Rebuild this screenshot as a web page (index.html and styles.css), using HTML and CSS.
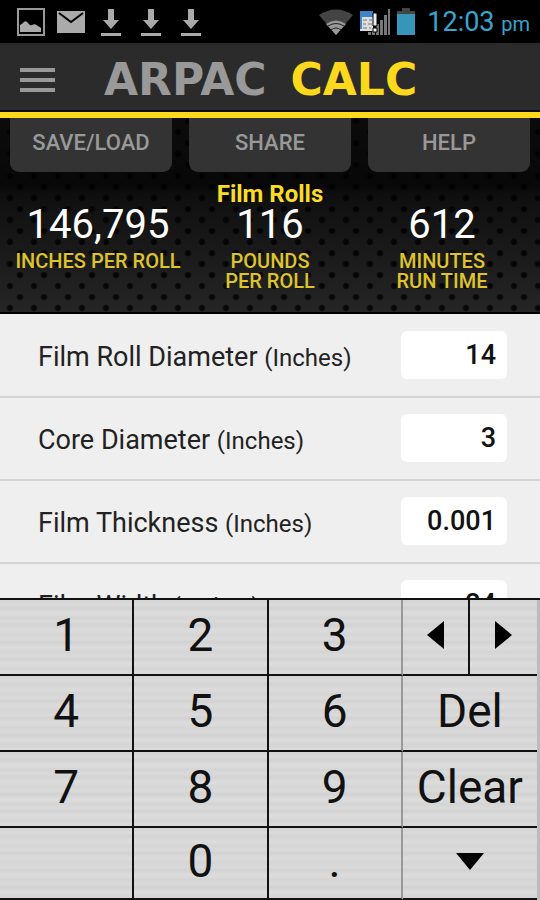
FILE: index.html
```html
<!doctype html>
<html lang="en">
<head>
    <meta charset="UTF-8">
    <meta name="viewport" content="width=device-width, initial-scale=1.0">
    <title>ARPAC CALC</title>

    <link rel="stylesheet" href="styles.css">
</head>
<body>

<div class="status">
    <svg class="status-icon" width="28" height="28" viewBox="0 0 28 28">
        <path d="M1 1H27V27H1Z" fill="none" stroke="#999" stroke-width="2"/>
        <path d="M3 24V17Q5 16 7 14Q9 12 11 15Q13 18 15 17Q18 15 21 18L24 20V24Z" fill="#aaa"/>
    </svg>
    <svg class="status-icon" width="28" height="22" viewBox="0 0 28 22">
        <path d="M0 0H28V22H0Z" fill="#aaa"/>
        <path d="M2 2L14 11L26 2" fill="none" stroke="#000" stroke-width="2"/>
    </svg>
    <svg class="status-icon" width="28" height="28" viewBox="0 0 28 28">
        <path d="M11 1H17V12H22L14 21L6 12H11ZM4 25H24V28H4Z" fill="#aaa"/>
    </svg>
    <svg class="status-icon" width="28" height="28" viewBox="0 0 28 28">
        <path d="M11 1H17V12H22L14 21L6 12H11ZM4 25H24V28H4Z" fill="#aaa"/>
    </svg>
    <svg class="status-icon" width="28" height="28" viewBox="0 0 28 28">
        <path d="M11 1H17V12H22L14 21L6 12H11ZM4 25H24V28H4Z" fill="#aaa"/>
    </svg>

    <div class="status-right">
        <svg width="34" height="26" viewBox="0 0 34 26">
            <path d="M0 6Q17 -5 34 6L17 26Z" fill="#444"/>
            <path d="M7 15Q17 8 27 15L17 26Z" fill="#999"/>
            <path d="M9 17Q17 12 25 17M12 21Q17 17 22 21" fill="none" stroke="#222" stroke-width="1"/>
        </svg>
        <svg width="32" height="26" viewBox="0 0 32 26">
            <path d="M9 26V23H12V26ZM13 26V20H16V26ZM17 26V15H20V26ZM21 26V11H24V26ZM25 26V6H28V26ZM29 26V0H31V26Z" fill="#777"/>
            <path d="M1 3H14V22H1Z" fill="#ddd"/>
            <path d="M1 2H14V8H3V20H1Z" fill="#3b86c8"/>
            <path d="M4 11H8M10 11H13M4 15H7M9 15H13M4 19H8M10 19H12" stroke="#777" stroke-width="1"/>
            <path d="M14 4H18V17H14ZM14 19H18V23H14Z" fill="#eee" stroke="#000" stroke-width="1"/>
        </svg>
        <svg width="18" height="27" viewBox="0 0 18 27">
            <path d="M5 0H13V3H18V6H0V3H5Z" fill="#444"/>
            <path d="M0 6H18V27H0Z" fill="#3795ba"/>
        </svg>
        <span class="clock">12:03 <small>pm</small></span>
    </div>
</div>

<header class="header">
    <button class="menu" aria-label="Menu">
        <svg width="36" height="26" viewBox="0 0 36 26">
            <path d="M0 3H35M0 13H35M0 23H35" stroke="#999" stroke-width="4"/>
        </svg>
    </button>
    <h1 class="logo"><span>ARPAC</span><span class="logo-calc">CALC</span></h1>
</header>

<section class="panel">
    <nav class="tabs">
        <button>SAVE/LOAD</button>
        <button>SHARE</button>
        <button>HELP</button>
    </nav>
    <h2 class="panel-title">Film Rolls</h2>
    <div class="results">
        <div class="result"><b>146,795</b>INCHES PER ROLL</div>
        <div class="result"><b>116</b>POUNDS<br>PER ROLL</div>
        <div class="result"><b>612</b>MINUTES<br>RUN TIME</div>
    </div>
</section>

<form class="fields">
    <div class="field">
        <label for="diameter">Film Roll Diameter <small>(Inches)</small></label>
        <input id="diameter" type="text" value="14">
    </div>
    <div class="field">
        <label for="core">Core Diameter <small>(Inches)</small></label>
        <input id="core" type="text" value="3">
    </div>
    <div class="field">
        <label for="thickness">Film Thickness <small>(Inches)</small></label>
        <input id="thickness" type="text" value="0.001">
    </div>
    <div class="field">
        <label for="width">Film Width <small>(Inches)</small></label>
        <input id="width" type="text" value="24">
    </div>
</form>

<div class="keypad">
    <button>1</button>
    <button>2</button>
    <button class="soft">3</button>
    <div class="arrows">
        <button aria-label="Previous">
            <svg width="17" height="28" viewBox="0 0 17 28"><path d="M17 0V28L0 14Z"/></svg>
        </button>
        <button aria-label="Next">
            <svg width="17" height="28" viewBox="0 0 17 28"><path d="M0 0V28L17 14Z"/></svg>
        </button>
    </div>
    <button>4</button>
    <button>5</button>
    <button class="soft">6</button>
    <button>Del</button>
    <button>7</button>
    <button>8</button>
    <button class="soft">9</button>
    <button>Clear</button>
    <button aria-label="Blank"></button>
    <button>0</button>
    <button class="soft">.</button>
    <button aria-label="Hide keypad">
        <svg width="28" height="17" viewBox="0 0 28 17"><path d="M0 0H28L14 17Z"/></svg>
    </button>
</div>

</body>
</html>
```
FILE: styles.css
```css
* {
    box-sizing: border-box;
}

body {
    display: flex;
    flex-direction: column;
    height: 100vh;
    margin: 0;
    overflow: hidden;
    background: #efefef;
    font-family: Roboto, "Liberation Sans", sans-serif;
}

button {
    margin: 0;
    padding: 0;
    border: 0;
    border-radius: 0;
    background: none;
    font-family: inherit;
}

svg {
    display: block;
}

.status {
    display: flex;
    flex: none;
    align-items: center;
    gap: 12px;
    height: 43px;
    padding: 0 10px 0 17px;
    background: #000;
}

.status-right {
    display: flex;
    align-items: center;
    gap: 6px;
    margin-left: auto;
}

.clock {
    margin-left: 6px;
    color: #36a5cf;
    font-size: 27px;
}

.clock small {
    font-size: 20px;
}

.header {
    display: flex;
    flex: none;
    align-items: center;
    height: 75px;
    padding: 4px 20px 0;
    background: #2b2b2b;
    border-bottom: 6px solid #fcd91c;
    box-shadow: inset 0 -2px #0c0c14;
}

.menu {
    flex: none;
}

.logo {
    display: flex;
    gap: 24px;
    margin: 0 0 0 48px;
    color: #999;
    font-family: "DejaVu Sans", sans-serif;
    font-size: 44px;
    font-weight: bold;
    line-height: 48px;
}

.logo-calc {
    color: #fcd91c;
}

.panel {
    flex: none;
    min-height: 196px;
    border-bottom: 2px solid #000;
    background:
        linear-gradient(rgba(0, 0, 0, .7), rgba(0, 0, 0, .8) 68px, rgba(0, 0, 0, .6) 76px, rgba(0, 0, 0, 0)),
        radial-gradient(circle at 10px 14px, #070707 2px, transparent 4px) 0 0 / 24px 22px,
        radial-gradient(circle at 20px 3px, #070707 2px, transparent 4px) 0 0 / 24px 22px,
        #252525;
    text-align: center;
}

.tabs {
    display: flex;
    gap: 17px;
    padding: 0 10px;
}

.tabs button {
    flex: 1;
    height: 54px;
    padding-bottom: 6px;
    border-radius: 0 0 9px 9px;
    background: #333;
    color: #999;
    font-size: 22px;
    font-weight: 500;
}

.panel-title {
    margin: 9px 0 0;
    color: #fcdd25;
    font-size: 24px;
    font-weight: bold;
    line-height: 26px;
}

.results {
    display: flex;
    padding: 0 12px;
}

.result {
    flex: 1;
    color: #dfc32b;
    font-size: 20px;
    font-weight: 500;
    line-height: 20px;
    white-space: nowrap;
}

.result b {
    display: block;
    margin-bottom: 8px;
    color: #fff;
    font-size: 40px;
    font-weight: normal;
    line-height: 36px;
}

.fields {
    flex: 1;
    min-height: 0;
    padding-top: 1px;
    overflow: hidden;
}

.field {
    display: flex;
    align-items: center;
    justify-content: space-between;
    height: 83px;
    padding: 0 33px 2px 38px;
    border-bottom: 2px solid #d4d4d4;
    color: #222;
    font-size: 27px;
}

.field label {
    padding-top: 5px;
}

.field small {
    font-size: 24px;
}

.field input {
    width: 106px;
    height: 48px;
    padding: 0 11px;
    border: 0;
    border-radius: 6px;
    background: #fff;
    color: #111;
    font-family: inherit;
    font-size: 27px;
    font-weight: 500;
    text-align: right;
}

.keypad {
    display: grid;
    flex: none;
    grid-template-columns: repeat(4, 1fr);
    grid-template-rows: repeat(3, 76px) 72px;
    padding-right: 3px;
    border-top: 2px solid #111;
    background: #bbb;
}

.keypad button {
    display: flex;
    align-items: center;
    justify-content: center;
    padding-bottom: 4px;
    border-right: 2px solid #111;
    border-bottom: 2px solid #111;
    background: repeating-linear-gradient(#d4d4d4, #dadada 5px, #d2d2d2 8px, #dcdcdc 13px, #d7d7d7 17px);
    color: #111;
    font-size: 46px;
}

.keypad button.soft {
    border-right-color: #999;
}

.keypad button:nth-child(4n),
.arrows button:last-child {
    border-right: 0;
}

.arrows {
    display: grid;
    grid-template-columns: 1fr 1fr;
}
```
